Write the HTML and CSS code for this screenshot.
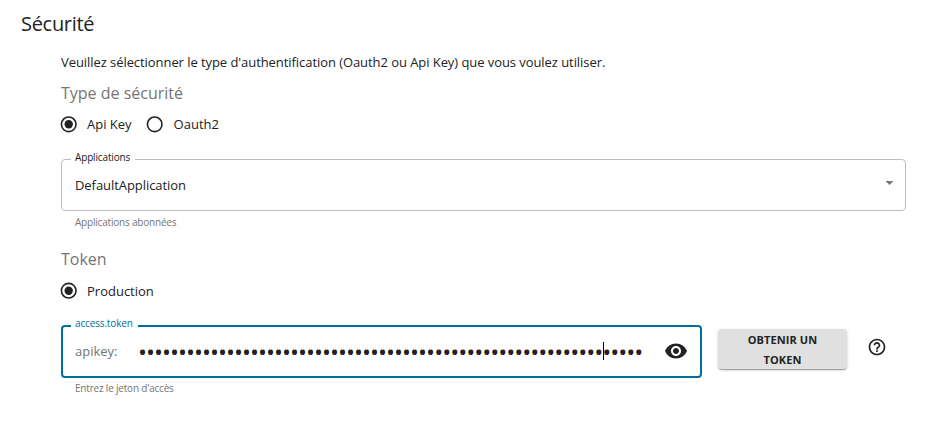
FILE: index.html
```html
<!DOCTYPE html>
<html lang="fr">
<head>
  <meta charset="UTF-8">
  <title>Sécurité</title>
  <link rel="stylesheet" href="styles.css">
</head>
<body>
  <h2>Sécurité</h2>

  <div class="content">
    <p class="intro">Veuillez sélectionner le type d'authentification (Oauth2 ou Api Key) que vous voulez utiliser.</p>

    <h3>Type de sécurité</h3>
    <div class="radios">
      <label class="radio">
        <svg viewBox="0 0 20 20"><circle class="ring" cx="9.700" cy="10.300" r="7.300"/><circle cx="9.700" cy="10.300" r="4.200"/></svg>
        <span>Api Key</span>
      </label>
      <label class="radio">
        <svg viewBox="0 0 20 20"><circle class="ring" cx="8.700" cy="10.300" r="7.300"/></svg>
        <span>Oauth2</span>
      </label>
    </div>

    <fieldset class="field">
      <legend>Applications</legend>
      <div class="field-row">
        <span class="value">DefaultApplication</span>
        <svg class="arrow" viewBox="0 0 8 4"><path d="M0 0h8L4 4z"/></svg>
      </div>
    </fieldset>
    <p class="helper">Applications abonnées</p>

    <h3 class="token-title">Token</h3>
    <div class="radios production">
      <label class="radio">
        <svg viewBox="0 0 20 20"><circle class="ring" cx="9.700" cy="9.700" r="7.300"/><circle cx="9.700" cy="9.700" r="4.200"/></svg>
        <span>Production</span>
      </label>
    </div>

    <div class="token-row">
      <div class="token-field">
        <fieldset class="field focused">
          <legend>access.token</legend>
          <div class="field-row">
            <span class="prefix">apikey:</span>
            <span class="dots">••••••••••••••••••••••••••••••••••••••••••••••••••••••••••<i class="caret"></i>•••••</span>
            <svg class="eye" viewBox="0 0 24 24"><path d="M12 4.500C7 4.500 2.730 7.610 1 12c1.730 4.390 6 7.500 11 7.500s9.270-3.110 11-7.500c-1.730-4.390-6-7.500-11-7.500zM12 17c-2.760 0-5-2.240-5-5s2.240-5 5-5 5 2.240 5 5-2.240 5-5 5zm0-8c-1.660 0-3 1.340-3 3s1.340 3 3 3 3-1.340 3-3-1.340-3-3-3z"/></svg>
          </div>
        </fieldset>
        <p class="helper">Entrez le jeton d'accès</p>
      </div>
      <button class="btn" type="button">OBTENIR UN TOKEN</button>
      <svg class="help" viewBox="0 0 24 24"><path d="M11 18h2v-2h-2v2zm1-16C6.480 2 2 6.480 2 12s4.480 10 10 10 10-4.480 10-10S17.520 2 12 2zm0 18c-4.410 0-8-3.590-8-8s3.590-8 8-8 8 3.590 8 8-3.590 8-8 8zm0-14c-2.210 0-4 1.790-4 4h2c0-1.100.9-2 2-2s2 .9 2 2c0 2-3 1.750-3 5h2c0-2.250 3-2.500 3-5 0-2.210-1.790-4-4-4z"/></svg>
    </div>
  </div>
</body>
</html>
```

FILE: styles.css
```css
body {
  margin: 0;
  padding: 10px 41px 0 21px;
  font-family: "Open Sans", sans-serif;
  font-size: 13px;
  color: #222;
  background: #fff;
}
h2, h3, p {
  margin: 0;
  font-weight: 400;
}
h2 {
  font-size: 20px;
  line-height: 28px;
  letter-spacing: -0.3px;
}
.content {
  padding: 14px 0 0 40px;
}
.intro {
  line-height: 20px;
  letter-spacing: -0.065px;
}
h3 {
  margin-top: 8px;
  font-size: 16px;
  line-height: 26px;
  color: #757575;
}
.radios {
  display: flex;
  gap: 14px;
  height: 20px;
  margin: 8px 0 0 -2px;
}
.radios.production {
  margin-top: 9px;
}
.radio {
  display: flex;
  align-items: center;
  gap: 8px;
}
.radio svg {
  width: 20px;
  height: 20px;
  fill: #222;
}
.radio .ring {
  fill: none;
  stroke: #222;
  stroke-width: 1.6;
}
.field {
  box-sizing: border-box;
  height: 57px;
  min-width: 0;
  margin: 20px 0 0;
  padding: 0 9px;
  border: 1px solid #bdbdbd;
  border-radius: 4px;
}
.field legend {
  height: 11px;
  padding: 0 5px 0 4px;
  font-size: 10px;
  line-height: 7px;
  letter-spacing: -0.15px;
}
.field-row {
  display: flex;
  align-items: center;
  height: 40px;
  padding: 0 2px 0 4px;
}
.value {
  flex: 1;
  letter-spacing: -0.06px;
}
.arrow {
  width: 9px;
  height: 4px;
  margin-bottom: 4px;
  fill: #757575;
}
.helper {
  margin: 3px 14px 0;
  font-size: 10px;
  line-height: 16px;
  letter-spacing: -0.2px;
  color: #757575;
}
.token-title {
  margin-top: 16px;
}
.token-row {
  display: flex;
  align-items: flex-start;
}
.token-field {
  width: 641px;
}
.token-field .helper {
  margin-top: 2px;
}
.focused {
  height: 58px;
  margin-top: 19px;
  padding: 0 8px;
  border: 2px solid #006e9c;
}
.focused .field-row {
  padding-right: 4px;
}
.focused legend {
  color: #006e9c;
}
.prefix {
  width: 64px;
  color: #757575;
}
.dots {
  flex: 1;
  height: 20px;
  margin-left: -1px;
  font-size: 24px;
  line-height: 22px;
  letter-spacing: -1.02px;
  white-space: nowrap;
}
.caret {
  display: inline-block;
  width: 1px;
  height: 18px;
  margin: 0 -2px 0 1px;
  vertical-align: 1px;
  background: #000;
}
.eye {
  width: 24px;
  height: 24px;
  fill: #222;
}
.btn {
  width: 129px;
  height: 40px;
  margin: 28px 20px 0 16px;
  padding: 1px 16px 0;
  border: 0;
  border-radius: 4px;
  background: #e0e0e0;
  box-shadow: 0 2px 1px -1px rgba(0, 0, 0, .3), 0 1px 3px rgba(0, 0, 0, .2);
  color: #222;
  font: 700 11px/20px "Open Sans", sans-serif;
  letter-spacing: 0.1px;
}
.help {
  width: 20px;
  height: 20px;
  margin-top: 36px;
  fill: #222;
}
```
